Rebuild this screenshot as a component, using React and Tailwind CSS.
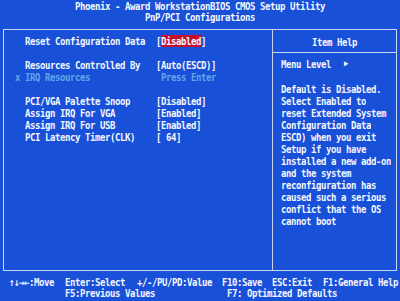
const rows = [
  { label: 'Reset Configuration Data', value: 'Disabled', selected: true },
  null,
  { label: 'Resources Controlled By', value: '[Auto(ESCD)]' },
  { label: 'IRQ Resources', value: ' Press Enter', locked: true },
  null,
  { label: 'PCI/VGA Palette Snoop', value: '[Disabled]' },
  { label: 'Assign IRQ For VGA', value: '[Enabled]' },
  { label: 'Assign IRQ For USB', value: '[Enabled]' },
  { label: 'PCI Latency Timer(CLK)', value: '[ 64]' },
]

const help = [
  'Default is Disabled.',
  'Select Enabled to',
  'reset Extended System',
  'Configuration Data',
  'ESCD) when you exit',
  'Setup if you have',
  'installed a new add-on',
  'and the system',
  'reconfiguration has',
  'caused such a serious',
  'conflict that the OS',
  'cannot boot',
]

export default function App() {
  return (
    <div
      className="w-[400px] h-[301px] overflow-hidden bg-[#1850d8] text-[#f4f6ff] font-bold text-[9px] tracking-[-0.42px] leading-[12px] whitespace-pre"
      style={{ fontFamily: '"DejaVu Sans Mono", "Liberation Mono", monospace' }}
    >
      {/* Title */}
      <div className="h-[29px] flex flex-col items-center pt-[1px] leading-[11px]">
        <div className="scale-y-[1.2]">Phoenix - Award WorkstationBIOS CMOS Setup Utility</div>
        <div className="scale-y-[1.2]">PnP/PCI Configurations</div>
      </div>

      {/* Main frame */}
      <div className="ml-[3px] w-[394px] h-[242px] border border-[#c9d3f2] flex">
        <div className="w-[269px] pt-[5px] border-r border-[#c9d3f2]">
          {rows.map((r, i) =>
            r ? (
              <div key={i} className="flex h-[12px] scale-y-[1.2]">
                <span className={`w-[10px] ml-[11px] ${r.locked ? 'text-[#62a6ea]' : ''}`}>{r.locked ? 'x' : ' '}</span>
                <span className={`w-[131px] ${r.locked ? 'text-[#62a6ea]' : ''}`}>{r.label}</span>
                {r.selected ? (
                  <span>
                    [<span className="bg-[#c4102a]">{r.value}</span>]
                  </span>
                ) : (
                  <span className={r.locked ? 'text-[#62a6ea]' : ''}>{r.value}</span>
                )}
              </div>
            ) : (
              <div key={i} className="h-[12px]" />
            )
          )}
        </div>

        <div className="flex-1 flex flex-col">
          <div className="h-[23px] border-b border-[#c9d3f2] flex items-center justify-center pt-[1px]">
            <span className="scale-y-[1.2]">Item Help</span>
          </div>
          <div className="pl-[8px] pt-[5px]">
            <div className="flex items-center h-[12px] scale-y-[1.2]">
              <span>Menu Level</span>
              <span className="ml-[13px] text-[7px]">▶</span>
            </div>
            <div className="h-[13px]" />
            {help.map((t, i) => (
              <div key={i} className="h-[12px] scale-y-[1.2]">{t}</div>
            ))}
          </div>
        </div>
      </div>

      {/* Footer */}
      <div className="pt-[7px] leading-[11px]">
        <div className="flex scale-y-[1.2]">
          <span className="ml-[9px] w-[56px]">↑↓→←:Move</span>
          <span className="w-[72px]">Enter:Select</span>
          <span className="w-[85px]">+/-/PU/PD:Value</span>
          <span className="w-[50px]">F10:Save</span>
          <span className="w-[51px]">ESC:Exit</span>
          <span>F1:General Help</span>
        </div>
        <div className="flex scale-y-[1.2]">
          <span className="ml-[65px] w-[162px]">F5:Previous Values</span>
          <span>F7: Optimized Defaults</span>
        </div>
      </div>
    </div>
  )
}
